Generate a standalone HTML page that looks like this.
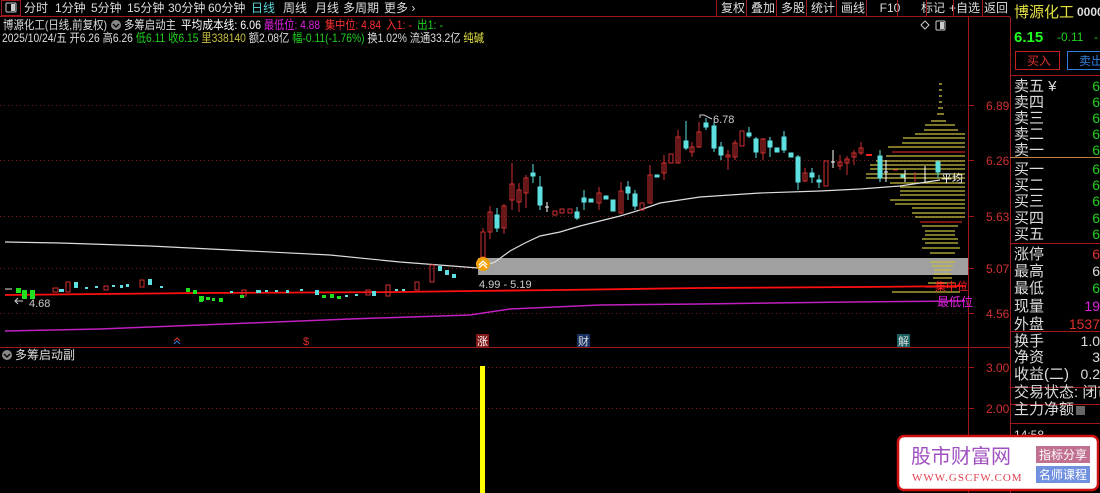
<!DOCTYPE html>
<html><head><meta charset="utf-8"><style>
*{margin:0;padding:0;box-sizing:border-box}
body{width:1100px;height:493px;background:#000;overflow:hidden;position:relative;font-family:"Liberation Sans","Noto Sans CJK SC",sans-serif;font-size:12px;color:#ddd}
.a{position:absolute;white-space:nowrap}
</style></head><body>
<svg class="a" style="left:0;top:0" width="1100" height="493" font-family="Liberation Sans, Noto Sans CJK SC, sans-serif">
<!-- toolbar -->
<line x1="0" y1="16.5" x2="1010" y2="16.5" stroke="#a01818"/>
<rect x="1.5" y="0.5" width="19" height="15" fill="none" stroke="#a01818"/>
<rect x="6" y="3" width="10" height="9" fill="none" stroke="#ccc" rx="1"/><rect x="11" y="4" width="4" height="7" fill="#ccc"/>
<g font-size="12" fill="#ddd">
<text x="24" y="12">分时</text><text x="55" y="12">1分钟</text><text x="91" y="12">5分钟</text><text x="127" y="12">15分钟</text><text x="168" y="12">30分钟</text><text x="208" y="12">60分钟</text>
<text x="251" y="12" fill="#5cd8d8">日线</text><text x="283" y="12">周线</text><text x="315" y="12">月线</text><text x="343" y="12">多周期</text><text x="384" y="12">更多 ›</text>
<text x="721" y="12">复权</text><text x="751" y="12">叠加</text><text x="781" y="12">多股</text><text x="811" y="12">统计</text><text x="841" y="12">画线</text><text x="890" y="12" text-anchor="middle">F10</text><text x="921" y="12">标记</text><text x="949" y="12">+自选</text><text x="984" y="12">返回</text>
</g>
<g stroke="#a01818"><line x1="716.5" y1="0" x2="716.5" y2="16"/><line x1="746.5" y1="0" x2="746.5" y2="16"/><line x1="776.5" y1="0" x2="776.5" y2="16"/><line x1="806.5" y1="0" x2="806.5" y2="16"/><line x1="836.5" y1="0" x2="836.5" y2="16"/><line x1="866.5" y1="0" x2="866.5" y2="16"/><line x1="897.5" y1="0" x2="897.5" y2="16"/><line x1="926.5" y1="0" x2="926.5" y2="16"/><line x1="953.5" y1="0" x2="953.5" y2="16"/><line x1="982.5" y1="0" x2="982.5" y2="16"/></g>
<!-- header info -->
<text x="3" y="29" fill="#ddd" font-size="12" textLength="104" lengthAdjust="spacingAndGlyphs">博源化工(日线,前复权)</text>
<circle cx="116" cy="25" r="5" fill="#888"/><path d="M113 24 l3 3 l3 -3" stroke="#000" fill="none" stroke-width="1.3"/>
<text x="124" y="29" fill="#ddd" textLength="52" lengthAdjust="spacingAndGlyphs">多筹启动主</text><text x="181" y="29" fill="#fff" textLength="80" lengthAdjust="spacingAndGlyphs">平均成本线: 6.06</text>
<text x="264" y="29" fill="#e020e0" textLength="56" lengthAdjust="spacingAndGlyphs">最低位: 4.88</text><text x="325" y="29" fill="#ff3030" textLength="56" lengthAdjust="spacingAndGlyphs">集中位: 4.84</text><text x="386" y="29" fill="#ff3030" textLength="26" lengthAdjust="spacingAndGlyphs">入1: -</text><text x="417" y="29" fill="#20d020" textLength="26" lengthAdjust="spacingAndGlyphs">出1: -</text>
<text x="2" y="42" fill="#ddd" textLength="482" lengthAdjust="spacingAndGlyphs">2025/10/24/五 开6.26 高6.26 <tspan fill="#20d020">低6.11 收6.15</tspan> <tspan fill="#c8c040">里338140</tspan> 额2.08亿 <tspan fill="#20d020">幅-0.11(-1.76%)</tspan> 换1.02% 流通33.2亿 <tspan fill="#e0e040">纯碱</tspan></text>
<path d="M921 25 l4 -4 l4 4 l-4 4z" fill="none" stroke="#ccc"/>
<rect x="936" y="21" width="9" height="9" fill="none" stroke="#ccc" rx="1"/><rect x="940" y="22" width="4" height="7" fill="#ccc"/>
<!-- frame -->
<line x1="968.5" y1="17" x2="968.5" y2="493" stroke="#a01818"/>
<line x1="1010.5" y1="17" x2="1010.5" y2="493" stroke="#a01818"/>
<line x1="0" y1="347.5" x2="1010" y2="347.5" stroke="#a01818"/>
<!-- grid -->
<g stroke="#801818" stroke-dasharray="1 3"><line x1="0" y1="105.5" x2="968" y2="105.5"/><line x1="0" y1="160.5" x2="968" y2="160.5"/><line x1="0" y1="216.5" x2="968" y2="216.5"/><line x1="0" y1="268.5" x2="968" y2="268.5"/><line x1="0" y1="313.5" x2="968" y2="313.5"/><line x1="0" y1="367.5" x2="968" y2="367.5"/><line x1="0" y1="408.5" x2="968" y2="408.5"/></g>
<g stroke="#a01818"><line x1="968" y1="105.5" x2="974" y2="105.5"/><line x1="968" y1="160.5" x2="974" y2="160.5"/><line x1="968" y1="216.5" x2="974" y2="216.5"/><line x1="968" y1="268.5" x2="974" y2="268.5"/><line x1="968" y1="313.5" x2="974" y2="313.5"/><line x1="968" y1="367.5" x2="974" y2="367.5"/><line x1="968" y1="408.5" x2="974" y2="408.5"/></g>
<g fill="#d03030" font-size="12"><text x="986" y="110">6.89</text><text x="986" y="165">6.26</text><text x="986" y="221">5.63</text><text x="986" y="273">5.07</text><text x="986" y="318">4.56</text><text x="986" y="372">3.00</text><text x="986" y="413">2.00</text></g>
<!-- gray box -->
<rect x="478" y="258" width="490" height="17" fill="#a0a0a0"/>
<!-- profile -->
<g stroke="#c8c040" stroke-width="1.3">
<line x1="939" y1="84" x2="942" y2="84"/><line x1="939" y1="90" x2="942" y2="90"/><line x1="939" y1="96" x2="942" y2="96"/><line x1="939" y1="102" x2="942" y2="102"/><line x1="938" y1="108" x2="943" y2="108"/><line x1="937" y1="114" x2="944" y2="114"/>
<line x1="931" y1="121" x2="946" y2="121"/><line x1="925" y1="125" x2="955" y2="125"/><line x1="924" y1="130" x2="958" y2="130"/><line x1="915" y1="134" x2="965" y2="134"/><line x1="903" y1="138" x2="965" y2="138"/><line x1="902" y1="143" x2="965" y2="143"/><line x1="888" y1="147" x2="965" y2="147"/>
<line x1="886" y1="156" x2="965" y2="156"/><line x1="876" y1="161" x2="965" y2="161"/><line x1="870" y1="165" x2="965" y2="165"/><line x1="870" y1="169" x2="965" y2="169"/><line x1="866" y1="174" x2="965" y2="174"/><line x1="866" y1="178" x2="965" y2="178"/><line x1="890" y1="183" x2="965" y2="183"/><line x1="900" y1="187" x2="965" y2="187"/><line x1="900" y1="191" x2="965" y2="191"/><line x1="900" y1="195" x2="965" y2="195"/><line x1="890" y1="200" x2="965" y2="200"/><line x1="895" y1="204" x2="965" y2="204"/><line x1="912" y1="208" x2="965" y2="208"/><line x1="912" y1="213" x2="965" y2="213"/><line x1="915" y1="217" x2="965" y2="217"/>
<line x1="922" y1="226" x2="958" y2="226"/><line x1="925" y1="231" x2="955" y2="231"/><line x1="925" y1="235" x2="955" y2="235"/><line x1="922" y1="239" x2="958" y2="239"/><line x1="925" y1="243" x2="958" y2="243"/><line x1="922" y1="248" x2="960" y2="248"/><line x1="930" y1="253" x2="955" y2="253"/>
<line x1="930" y1="262" x2="955" y2="262"/><line x1="932" y1="266" x2="953" y2="266"/><line x1="934" y1="270" x2="951" y2="270"/><line x1="934" y1="274" x2="951" y2="274"/><line x1="933" y1="278" x2="952" y2="278"/><line x1="928" y1="283" x2="955" y2="283"/><line x1="892" y1="292" x2="960" y2="292"/>
</g>
<g stroke="#c02020" stroke-width="1.3"><line x1="892" y1="152" x2="965" y2="152"/><line x1="920" y1="222" x2="962" y2="222"/><line x1="925" y1="287" x2="957" y2="287"/></g>
<!-- lines -->
<polyline fill="none" stroke="#ddd" stroke-width="1.2" points="5,242 60,243 150,246 250,251 330,255 400,262 478,268 495,262 510,251 525,243 540,236 560,232 580,226 600,221 620,216 640,210 660,203 700,197 760,193 820,191 860,189 900,186 940,180"/>
<polyline fill="none" stroke="#ff1010" stroke-width="1.8" points="5,295 100,294 200,293 400,292 470,291 560,290 700,288 860,287 965,286"/>
<polyline fill="none" stroke="#c020c0" stroke-width="1.5" points="5,331 100,329 150,327 250,323 350,319 470,315 510,309 600,305 700,304 850,302 965,301"/>
<text x="941" y="182" fill="#fff" font-size="11">平均</text>
<text x="935" y="290" fill="#ff2020" font-size="11">集中位</text>
<text x="937" y="306" fill="#e020e0" font-size="12">最低位</text>
<!-- left candles -->
<g>
<line x1="5" y1="289" x2="12" y2="289" stroke="#ddd"/>
<rect x="16" y="288" width="5" height="5" fill="#20e020"/><rect x="22" y="290" width="5" height="9" fill="#20e020"/><rect x="30" y="290" width="5" height="9" fill="#20e020"/>
<rect x="53" y="288" width="5" height="4" fill="none" stroke="#d03030"/><rect x="59" y="289" width="5" height="3" fill="#5ee0e0"/>
<rect x="66" y="282" width="4" height="10" fill="none" stroke="#d03030"/><rect x="74" y="282" width="4" height="6" fill="#5ee0e0"/>
<rect x="104" y="286" width="4" height="4" fill="none" stroke="#d03030"/><rect x="140" y="280" width="4" height="7" fill="none" stroke="#d03030"/><rect x="148" y="279" width="4" height="6" fill="#5ee0e0"/>
<rect x="186" y="288" width="4" height="4" fill="#20e020"/><rect x="193" y="290" width="4" height="4" fill="#20e020"/><rect x="199" y="296" width="4" height="6" fill="#20e020"/><rect x="219" y="298" width="4" height="4" fill="#20e020"/>
<rect x="242" y="290" width="4" height="6" fill="none" stroke="#d03030"/><rect x="256" y="290" width="5" height="3" fill="#5ee0e0"/><rect x="315" y="290" width="4" height="5" fill="#5ee0e0"/>
<rect x="330" y="294" width="4" height="4" fill="#20e020"/><rect x="337" y="296" width="4" height="3" fill="#20e020"/>
<rect x="366" y="290" width="4" height="5" fill="none" stroke="#d03030"/><rect x="372" y="291" width="4" height="5" fill="#5ee0e0"/><rect x="386" y="285" width="4" height="11" fill="none" stroke="#d03030"/>
<rect x="415" y="282" width="4" height="8" fill="none" stroke="#d03030"/><rect x="430" y="265" width="4" height="17" fill="none" stroke="#d03030"/><rect x="438" y="266" width="4" height="5" fill="#5ee0e0"/><rect x="445" y="270" width="4" height="5" fill="#5ee0e0"/><rect x="452" y="274" width="4" height="4" fill="#5ee0e0"/>
<g fill="#5ee0e0"><rect x="85" y="287" width="3" height="2"/><rect x="95" y="286" width="3" height="2"/><rect x="112" y="285" width="3" height="2"/><rect x="120" y="285" width="3" height="3"/><rect x="126" y="284" width="3" height="3"/><rect x="160" y="286" width="3" height="2"/><rect x="230" y="291" width="3" height="2"/><rect x="265" y="290" width="3" height="2"/><rect x="275" y="290" width="3" height="2"/><rect x="286" y="290" width="3" height="3"/><rect x="300" y="289" width="3" height="2"/><rect x="345" y="295" width="3" height="2"/><rect x="355" y="294" width="3" height="2"/><rect x="395" y="289" width="3" height="2"/><rect x="402" y="289" width="3" height="2"/></g>
<g fill="#20e020"><rect x="200" y="296" width="4" height="5"/><rect x="206" y="297" width="4" height="3"/><rect x="212" y="298" width="3" height="3"/><rect x="322" y="295" width="4" height="3"/><rect x="240" y="295" width="4" height="3"/></g>
<path d="M18 298 l-3 3 l3 3 M15 301 h8" stroke="#ccc" fill="none"/><text x="29" y="307" fill="#ccc" font-size="11">4.68</text>
</g>
<!-- right candles -->
<g fill="none" stroke="#d03030" stroke-width="1">
<rect x="481" y="232" width="4" height="25"/><line x1="483" y1="232" x2="483" y2="228"/>
<rect x="488" y="212" width="4" height="20"/><line x1="490" y1="206" x2="490" y2="239"/>
<rect x="502" y="206" width="4" height="22"/><line x1="504" y1="204" x2="504" y2="234"/>
<rect x="510" y="184" width="4" height="16"/><line x1="512" y1="163" x2="512" y2="210"/>
<rect x="517" y="190" width="4" height="12"/><line x1="519" y1="183" x2="519" y2="212"/>
<rect x="524" y="178" width="4" height="15"/><line x1="526" y1="175" x2="526" y2="208"/>
<rect x="553" y="211" width="4" height="4"/><rect x="560" y="209" width="4" height="4"/><rect x="568" y="209" width="4" height="4"/>
<rect x="597" y="193" width="4" height="10"/><line x1="599" y1="187" x2="599" y2="210"/>
<rect x="619" y="191" width="4" height="22"/><line x1="621" y1="182" x2="621" y2="214"/>
<rect x="640" y="203" width="4" height="7"/>
<rect x="648" y="175" width="4" height="28"/><line x1="650" y1="165" x2="650" y2="203"/>
<rect x="662" y="163" width="4" height="10"/><line x1="664" y1="155" x2="664" y2="180"/>
<rect x="669" y="154" width="4" height="9"/>
<rect x="676" y="137" width="4" height="26"/><line x1="678" y1="130" x2="678" y2="163"/>
<rect x="690" y="147" width="4" height="5"/><line x1="692" y1="142" x2="692" y2="157"/>
<rect x="697" y="132" width="4" height="15"/><line x1="699" y1="122" x2="699" y2="148"/>
<rect x="726" y="155" width="4" height="2"/><line x1="728" y1="150" x2="728" y2="170"/>
<rect x="733" y="143" width="4" height="14"/><line x1="735" y1="140" x2="735" y2="160"/>
<rect x="740" y="131" width="4" height="15"/>
<rect x="761" y="139" width="4" height="14"/><line x1="763" y1="138" x2="763" y2="160"/>
<rect x="803" y="173" width="4" height="8"/><line x1="805" y1="168" x2="805" y2="182"/>
<rect x="824" y="161" width="4" height="25"/>
<rect x="838" y="162" width="4" height="4"/><line x1="840" y1="155" x2="840" y2="170"/>
<rect x="845" y="159" width="4" height="4"/><line x1="847" y1="156" x2="847" y2="175"/>
<rect x="852" y="153" width="4" height="4"/><line x1="854" y1="150" x2="854" y2="165"/>
<rect x="859" y="148" width="4" height="5"/><line x1="861" y1="142" x2="861" y2="155"/>
<line x1="866" y1="155" x2="872" y2="155" stroke="#ff2020" stroke-width="2"/>
<line x1="893" y1="170" x2="898" y2="170"/><line x1="915" y1="172" x2="915" y2="182"/>
</g>
<g fill="#5ee0e0" stroke="#5ee0e0">
<rect x="495" y="215" width="4" height="13"/><line x1="497" y1="208" x2="497" y2="232"/>
<rect x="531" y="173" width="4" height="3"/><line x1="533" y1="164" x2="533" y2="183"/>
<rect x="538" y="187" width="4" height="18"/><line x1="540" y1="176" x2="540" y2="210"/>
<rect x="575" y="212" width="4" height="6"/><line x1="577" y1="207" x2="577" y2="220"/>
<rect x="582" y="198" width="4" height="4"/><line x1="584" y1="190" x2="584" y2="210"/>
<rect x="589" y="199" width="4" height="3"/>
<rect x="604" y="196" width="4" height="3"/>
<rect x="611" y="200" width="4" height="11"/>
<rect x="626" y="187" width="4" height="6"/><line x1="628" y1="181" x2="628" y2="200"/>
<rect x="633" y="194" width="4" height="12"/><line x1="635" y1="190" x2="635" y2="210"/>
<rect x="655" y="175" width="4" height="2"/>
<rect x="684" y="141" width="4" height="7"/><line x1="686" y1="121" x2="686" y2="150"/>
<rect x="704" y="123" width="4" height="4"/><line x1="706" y1="118" x2="706" y2="130"/>
<rect x="712" y="126" width="4" height="22"/><line x1="714" y1="122" x2="714" y2="152"/>
<rect x="719" y="147" width="4" height="8"/><line x1="721" y1="142" x2="721" y2="160"/>
<rect x="747" y="133" width="4" height="3"/><line x1="749" y1="127" x2="749" y2="138"/>
<rect x="754" y="139" width="4" height="13"/><line x1="756" y1="137" x2="756" y2="158"/>
<rect x="768" y="141" width="4" height="6"/><line x1="770" y1="137" x2="770" y2="157"/>
<rect x="775" y="148" width="4" height="4"/>
<rect x="782" y="137" width="4" height="13"/><line x1="784" y1="131" x2="784" y2="153"/>
<rect x="789" y="153" width="4" height="4"/>
<rect x="796" y="157" width="4" height="25"/><line x1="798" y1="155" x2="798" y2="190"/>
<rect x="810" y="173" width="4" height="4"/><line x1="812" y1="168" x2="812" y2="183"/>
<rect x="817" y="180" width="4" height="2"/><line x1="819" y1="175" x2="819" y2="188"/>
<rect x="878" y="156" width="4" height="22"/><line x1="880" y1="150" x2="880" y2="182"/>
<rect x="936" y="162" width="4" height="10"/><line x1="938" y1="160" x2="938" y2="178"/>
<rect x="901" y="175" width="4" height="2"/>
</g>
<g stroke="#fff"><line x1="545" y1="207" x2="549" y2="207"/><line x1="547" y1="202" x2="547" y2="212"/><line x1="831" y1="162" x2="835" y2="162"/><line x1="833" y1="150" x2="833" y2="168"/><line x1="884" y1="172" x2="888" y2="172"/><line x1="886" y1="160" x2="886" y2="182"/><line x1="905" y1="170" x2="905" y2="182"/><line x1="925" y1="166" x2="925" y2="182"/></g>
<path d="M700 118 v-3 l4 0 l8 4" stroke="#ccc" fill="none"/><text x="713" y="123" fill="#ccc" font-size="11">6.78</text>
<text x="479" y="288" fill="#ccc" font-size="11">4.99 - 5.19</text>
<circle cx="483" cy="264" r="7" fill="#f0a000"/><path d="M479 265 l4 -4 l4 4 M479 268 l4 -4 l4 4" stroke="#fff" fill="none" stroke-width="1.3"/>
<!-- markers -->
<path d="M174 344 l3 -3 l3 3" stroke="#3080e0" fill="none"/><path d="M174 341 l3 -3 l3 3" stroke="#e03030" fill="none"/>
<text x="303" y="345" fill="#e03030" font-size="11">$</text>
<rect x="476" y="334" width="13" height="13" fill="#801818"/><text x="477" y="345" fill="#fff" font-size="11">涨</text>
<rect x="577" y="334" width="13" height="13" fill="#183060"/><text x="578" y="345" fill="#ddd" font-size="11">财</text>
<rect x="897" y="334" width="13" height="13" fill="#186060"/><text x="898" y="345" fill="#ddd" font-size="11">解</text>
<!-- sub panel -->
<circle cx="7" cy="355" r="5" fill="#888"/><path d="M4 354 l3 3 l3 -3" stroke="#000" fill="none" stroke-width="1.3"/>
<text x="15" y="359" fill="#ddd">多筹启动副</text>
<rect x="480" y="366" width="5" height="127" fill="#ffff00"/>
<!-- right panel -->
<g font-size="14" fill="#ddd">
<text x="1014" y="17" fill="#e0e040" font-size="15">博源化工</text><text x="1077" y="16" font-size="12" font-weight="bold">0000</text>
<text x="1014" y="42" fill="#20ff20" font-size="15" font-weight="bold">6.15</text><text x="1057" y="41" fill="#20d020" font-size="12">-0.11</text><text x="1094" y="41" fill="#20d020" font-size="12">-</text>
</g>
<rect x="1015.5" y="51.5" width="44" height="18" fill="none" stroke="#c02020"/><text x="1027" y="65" fill="#e03030" font-size="12">买入</text>
<rect x="1067.5" y="51.5" width="40" height="18" fill="none" stroke="#3080e0"/><text x="1079" y="65" fill="#3080e0" font-size="12">卖出</text>
<line x1="1010" y1="75.5" x2="1100" y2="75.5" stroke="#a01818"/>
<line x1="1010" y1="157.5" x2="1100" y2="157.5" stroke="#c08040"/>
<line x1="1010" y1="243.5" x2="1100" y2="243.5" stroke="#a01818"/>
<line x1="1010" y1="331.5" x2="1100" y2="331.5" stroke="#a01818"/>
<line x1="1010" y1="387.5" x2="1100" y2="387.5" stroke="#a01818"/>
<line x1="1010" y1="404.5" x2="1100" y2="404.5" stroke="#a01818"/>
<line x1="1010" y1="423.5" x2="1100" y2="423.5" stroke="#a01818"/>
<g font-size="15" fill="#ddd">
<text x="1014" y="91">卖五 ¥</text><text x="1014" y="107">卖四</text><text x="1014" y="123">卖三</text><text x="1014" y="139">卖二</text><text x="1014" y="155">卖一</text>
<text x="1014" y="174">买一</text><text x="1014" y="190">买二</text><text x="1014" y="206">买三</text><text x="1014" y="223">买四</text><text x="1014" y="239">买五</text>
<text x="1014" y="259">涨停</text><text x="1014" y="276">最高</text><text x="1014" y="293">最低</text><text x="1014" y="311">现量</text><text x="1014" y="329">外盘</text>
<text x="1014" y="346">换手</text><text x="1014" y="362">净资</text><text x="1014" y="379">收益(二)</text>
<text x="1014" y="397">交易状态: 闭市</text><text x="1014" y="414">主力净额</text>
</g>
<g font-size="14" fill="#20d020" text-anchor="end">
<text x="1100" y="91">6</text><text x="1100" y="107">6</text><text x="1100" y="123">6</text><text x="1100" y="139">6</text><text x="1100" y="155">6</text>
<text x="1100" y="174">6</text><text x="1100" y="190">6</text><text x="1100" y="206">6</text><text x="1100" y="223">6</text><text x="1100" y="239">6</text>
<text x="1100" y="259" fill="#e03030">6</text><text x="1100" y="276" fill="#ddd">6</text><text x="1100" y="293">6</text><text x="1100" y="311" fill="#e020e0">19</text><text x="1100" y="329" fill="#e03030">1537</text>
<text x="1100" y="346" fill="#ddd">1.0</text><text x="1100" y="362" fill="#ddd">3</text><text x="1100" y="379" fill="#ddd">0.2</text>
</g>
<rect x="1076" y="406" width="9" height="9" fill="#666"/>
<text x="1014" y="439" fill="#ddd" font-size="12">14:58</text>
<!-- watermark -->
<rect x="898" y="436" width="200" height="54" rx="6" fill="#fff" stroke="#d01010" stroke-width="2.5"/>
<text x="911" y="463" fill="#a050c0" font-size="20">股市财富网</text>
<text x="912" y="481" fill="#e04050" font-size="11" font-family="Liberation Serif, serif" letter-spacing="1">WWW.GSCFW.COM</text>
<rect x="1036" y="446" width="54" height="17" fill="#c07090"/><text x="1039" y="459" fill="#fff" font-size="12">指标分享</text>
<rect x="1036" y="466" width="54" height="17" fill="#7090e0"/><text x="1039" y="479" fill="#fff" font-size="12">名师课程</text>
</svg>
</body></html>
